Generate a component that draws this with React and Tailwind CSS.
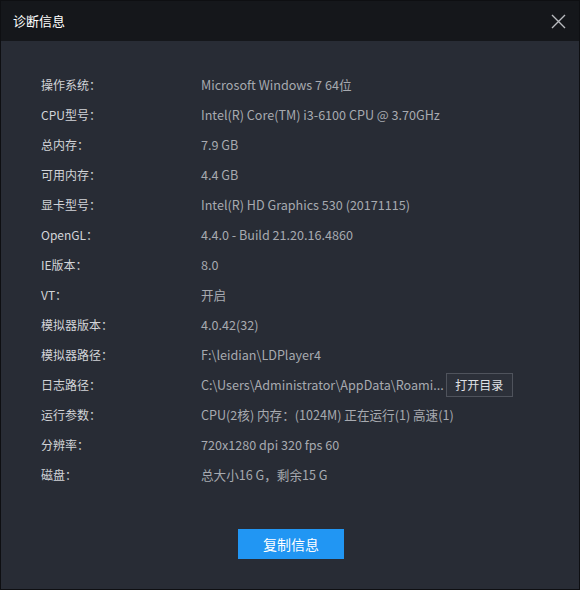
import React from 'react';

const rows = [
  ['操作系统：', 'Microsoft Windows 7 64位'],
  ['CPU型号：', 'Intel(R) Core(TM) i3-6100 CPU @ 3.70GHz'],
  ['总内存：', '7.9 GB'],
  ['可用内存：', '4.4 GB'],
  ['显卡型号：', 'Intel(R) HD Graphics 530 (20171115)'],
  ['OpenGL：', '4.4.0 - Build 21.20.16.4860'],
  ['IE版本：', '8.0'],
  ['VT：', '开启'],
  ['模拟器版本：', '4.0.42(32)'],
  ['模拟器路径：', 'F:\\leidian\\LDPlayer4'],
  ['日志路径：', 'C:\\Users\\Administrator\\AppData\\Roami...', true],
  ['运行参数：', 'CPU(2核) 内存：(1024M) 正在运行(1) 高速(1)'],
  ['分辨率：', '720x1280 dpi 320 fps 60'],
  ['磁盘：', '总大小16 G，剩余15 G'],
];

const font = { fontFamily: '"Noto Sans CJK SC", "Noto Sans", sans-serif' };

export default function App() {
  return (
    <div
      className="w-[580px] h-[590px] border border-[#0e0f12] bg-[#282c35] flex flex-col"
      style={font}
    >
      {/* Title bar */}
      <div className="h-[40px] bg-[#15171b] flex items-center justify-between pl-[12px] pr-[13px]">
        <span className="text-[13px] text-white">诊断信息</span>
        <svg width="15" height="15" viewBox="0 0 15 15" className="text-[#b9bbbf]">
          <path d="M1 1L14 14M14 1L1 14" stroke="currentColor" strokeWidth="1.4" />
        </svg>
      </div>

      {/* Info rows */}
      <div className="flex flex-col pl-[40px] pt-[29px]">
        {rows.map(([label, value, hasButton]) => (
          <div key={label} className="h-[30px] flex items-center">
            <span className="w-[160px] shrink-0 text-[12px] text-[#d2d4d8]">{label}</span>
            <span className="whitespace-nowrap text-[12.6px] text-[#a7aab0]">{value}</span>
            {hasButton && (
              <button className="ml-[2px] shrink-0 w-[67px] h-[24px] border border-[#4f535c] bg-[#2c3039] text-[12px] text-[#e0e2e6]">
                打开目录
              </button>
            )}
          </div>
        ))}
      </div>

      <div className="flex justify-center mt-[39px]">
        <button className="w-[106px] h-[30px] bg-[#2196f3] text-white text-[14px] ml-[2px]">
          复制信息
        </button>
      </div>
    </div>
  );
}
